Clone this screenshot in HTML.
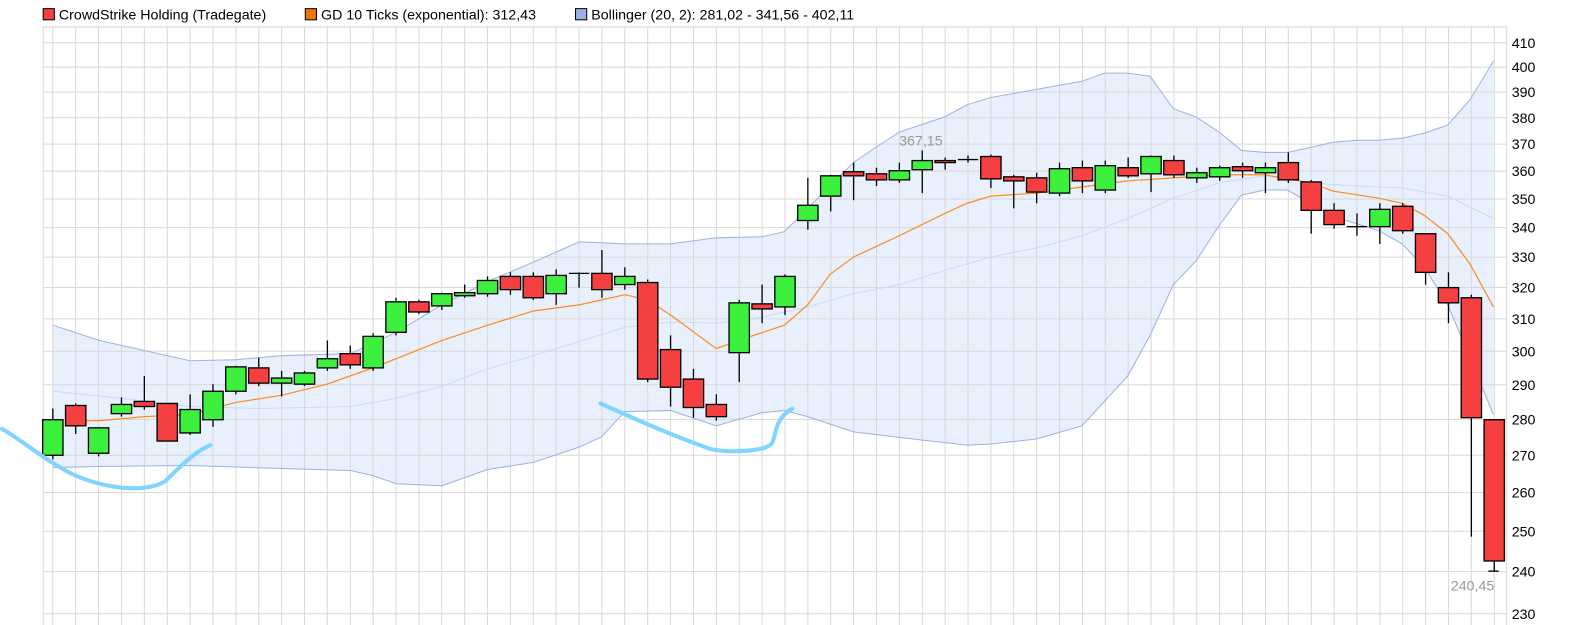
<!DOCTYPE html>
<html><head><meta charset="utf-8"><style>html,body{margin:0;padding:0;background:#fff;overflow:hidden}svg{display:block;font-family:"Liberation Sans",Arial,sans-serif}</style></head>
<body>
<svg id="s" width="1591" height="625" viewBox="0 0 1566 615" preserveAspectRatio="none" xmlns="http://www.w3.org/2000/svg"></svg>
<script>
const s=document.getElementById('s');let h='';
const Y=v=>42+972*(Math.log(410)-Math.log(v));
// legend
h+='<rect x="42.5" y="8.5" width="11" height="11" fill="#f44040" stroke="#000"/><text x="58" y="19" font-size="14">CrowdStrike Holding (Tradegate)</text>';
h+='<rect x="300.5" y="8.5" width="11" height="11" fill="#f07800" stroke="#000"/><text x="316" y="19" font-size="14">GD 10 Ticks (exponential): 312,43</text>';
h+='<rect x="566.5" y="8.5" width="11" height="11" fill="#9cb2e4" stroke="#000"/><text x="582" y="19" font-size="14">Bollinger (20, 2): 281,02 - 341,56 - 402,11</text>';
// band
const up=[[52,320],[98,335],[187,355],[232,354],[277,350],[345,348],[390,327],[435,300],[480,277],[525,258],[570,238],[615,240],[660,240],[705,234],[750,233],[772,228],[795,205],[817,183],[840,160],[862,145],[885,130],[930,115],[952,103],[975,96],[1020,88],[1065,80],[1087,72],[1110,72],[1132,75],[1155,107],[1177,115],[1200,130],[1222,148],[1245,150],[1267,150],[1290,145],[1312,140],[1335,138],[1357,138],[1380,136],[1402,131],[1425,123],[1447,98],[1470,60]];
const lo=[[52,460],[98,459],[187,458],[277,461],[345,463],[367,468],[390,476],[435,478],[480,462],[525,455],[570,440],[592,430],[615,405],[660,404],[705,419],[750,406],[772,404],[795,410],[840,425],[907,433],[952,438],[975,437],[1020,432],[1065,419],[1087,395],[1110,370],[1132,330],[1155,280],[1177,257],[1200,222],[1222,192],[1245,187],[1267,187],[1290,200],[1312,213],[1335,220],[1357,227],[1380,240],[1402,263],[1425,300],[1447,352],[1470,408]];
const mid=[[52,385],[120,392],[187,400],[255,402],[345,400],[390,392],[435,380],[480,363],[525,350],[570,336],[615,322],[660,317],[705,318],[750,312],[795,302],[840,289],[885,280],[930,266],[975,253],[1020,244],[1065,232],[1110,215],[1155,195],[1200,180],[1245,173],[1290,180],[1335,183],[1380,185],[1425,193],[1470,215]];
const gd=[[75,414],[97,414],[142,410],[187,408],[232,396],[277,389],[322,378],[367,362],[390,353],[435,335],[480,320],[525,306],[570,300],[615,290],[637,295],[660,310],[705,343],[727,335],[772,320],[795,300],[817,270],[840,253],[885,232],[930,210],[952,200],[975,193],[1020,190],[1065,184],[1110,178],[1155,175],[1200,172],[1245,172],[1290,180],[1312,188],[1357,195],[1380,200],[1402,212],[1425,230],[1447,260],[1470,302]];
const P=a=>a.map(p=>p.join(',')).join(' ');
h+='<polygon points="'+P(up)+' '+P(lo.slice().reverse())+'" fill="#e9f0fd"/>';
// grid
for(let v=230;v<=410;v+=10){const y=Y(v).toFixed(1);h+='<line x1="42" x2="1483" y1="'+y+'" y2="'+y+'" stroke="#d8d8d8"/><text x="1488" y="'+(+y+5)+'" font-size="14">'+v+'</text>';}
h+='<line x1="42" x2="1483" y1="26.5" y2="26.5" stroke="#d8d8d8"/>';
h+='<line x1="42.5" x2="42.5" y1="26" y2="615" stroke="#d8d8d8"/><line x1="1483" x2="1483" y1="26" y2="615" stroke="#d8d8d8"/>';
for(let i=0;i<64;i++){const x=(52+22.52*i).toFixed(1);h+='<line x1="'+x+'" x2="'+x+'" y1="26" y2="615" stroke="#d8d8d8"/>';}
h+='<polyline points="'+P(up)+'" fill="none" stroke="#9cb2e4"/><polyline points="'+P(lo)+'" fill="none" stroke="#9cb2e4"/><polyline points="'+P(mid)+'" fill="none" stroke="#c8daf6"/>';
h+='<polyline points="'+P(gd)+'" fill="none" stroke="#ff8c1a" stroke-width="1.2"/>';
// candles [bt,bb,wt,wb,g]
const c=[[413,448,402,452,1],[399,419,397,427,0],[421,446,421,449,1],[398,407,391,410,1],[395,400,370,403,0],[397,434,397,434,0],[403,426,388,428,1],[385,413,378,420,1],[361,385,360,388,1],[362,377,352,380,0],[372,377,365,390,1],[367,378,365,380,1],[353,362,335,365,1],[348,359,340,363,0],[331,362,328,365,1],[297,327,293,330,1],[297,307,295,309,0],[289,301,288,305,1],[288,291,280,293,1],[276,289,272,292,1],[272,285,268,290,0],[272,293,268,295,0],[271,289,265,300,1],[269,269,268,283,2],[269,285,246,293,0],[272,280,263,285,1],[278,373,275,376,0],[344,381,330,400,0],[373,401,363,411,0],[398,410,388,414,0],[298,347,295,376,1],[299,304,280,318,0],[272,302,270,310,1],[202,217,175,226,1],[173,193,172,208,1],[169,173,160,197,0],[171,177,165,183,0],[168,177,160,180,1],[158,167,148,190,1],[158,160,155,167,0],[157,157,153,160,2],[154,176,152,185,0],[174,178,172,205,0],[175,189,170,200,0],[166,190,160,193,1],[165,178,158,190,0],[163,187,158,190,1],[165,173,155,175,0],[154,171,153,189,1],[158,172,153,175,0],[170,175,165,180,1],[165,174,163,178,1],[164,168,160,175,0],[165,170,160,190,1],[160,177,150,180,0],[179,207,177,230,0],[207,221,200,225,0],[223,223,210,232,2],[206,223,200,240,1],[203,227,200,230,0],[230,268,230,280,0],[283,298,268,318,0],[293,411,290,528,0],[413,552,413,562,0]];
c.forEach((d,i)=>{const x=52+22.52*i;h+='<line x1="'+x+'" x2="'+x+'" y1="'+d[2]+'" y2="'+d[3]+'" stroke="#000" stroke-width="1.3"/>';
if(d[4]==2)h+='<line x1="'+(x-10)+'" x2="'+(x+10)+'" y1="'+d[0]+'" y2="'+d[0]+'" stroke="#000" stroke-width="1.3"/>';
else h+='<rect x="'+(x-10)+'" y="'+d[0]+'" width="20" height="'+Math.max(d[1]-d[0],2)+'" fill="'+(d[4]?'#3ef03e':'#f44040')+'" stroke="#000" stroke-width="1.3"/>';});
h+='<line x1="1465" x2="1475" y1="562" y2="562" stroke="#000" stroke-width="1.3"/>';
// cyan
h+='<path d="M2,422 C20,432 40,450 70,466 C100,480 140,486 162,474 C175,462 190,445 207,438" fill="none" stroke="#80d4ff" stroke-width="4" stroke-linecap="round"/>';
h+='<path d="M591,397 C620,410 660,428 700,442 C720,446 755,444 760,436 C764,428 762,412 780,402" fill="none" stroke="#80d4ff" stroke-width="4" stroke-linecap="round"/>';
h+='<text x="885" y="143" font-size="14" fill="#999">367,15</text><text x="1428" y="581" font-size="14" fill="#999">240,45</text>';
s.innerHTML=h;
</script>
</body></html>
